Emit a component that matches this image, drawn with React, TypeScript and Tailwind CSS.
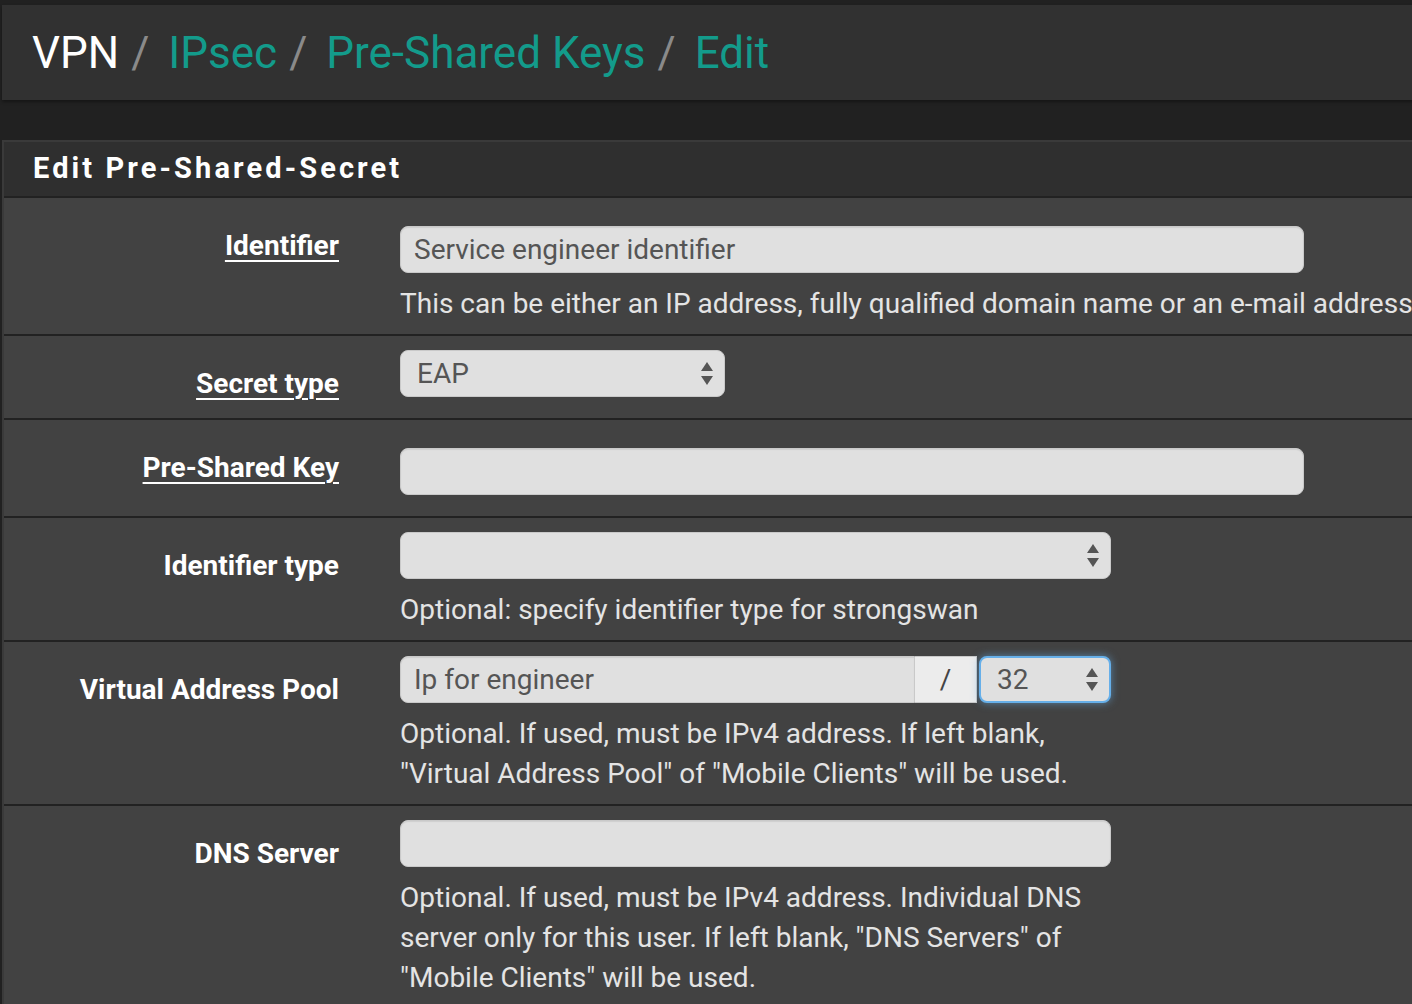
import React from "react";

const font = "font-['Roboto','Liberation_Sans',sans-serif]";

function Arrows() {
  return (
    <svg width="14" height="26" viewBox="0 0 14 26" className="shrink-0">
      <path d="M7 1 L13 10 L1 10 Z" fill="#555" />
      <path d="M1 15 L13 15 L7 24 Z" fill="#555" />
    </svg>
  );
}

function TextBox({ width, value, rounded = "rounded-[8px]" }: { width: string; value?: string; rounded?: string }) {
  return (
    <div
      className={`${width} ${rounded} flex h-[47px] items-center border border-[#c9c9c9] bg-[#e0e0e0] px-[13px] text-[28px] text-[#555] shadow-[inset_0_1px_1px_rgba(0,0,0,0.08)]`}
    >
      {value}
    </div>
  );
}

function SelectBox({ width, value, focus = false }: { width: string; value?: string; focus?: boolean }) {
  const edge = focus
    ? "border-2 border-[#66afe9] shadow-[0_0_8px_rgba(102,175,233,0.6)]"
    : "border border-[#c9c9c9]";
  return (
    <div
      className={`${width} flex h-[47px] items-center justify-between rounded-[8px] bg-[#e0e0e0] pl-[16px] pr-[10px] text-[28px] text-[#555] ${edge}`}
    >
      <span>{value}</span>
      <Arrows />
    </div>
  );
}

function Help({ lines }: { lines: string[] }) {
  return (
    <div className="mt-[11px] text-[28px] leading-[40px] text-[#e4e4e4]">
      {lines.map((l) => (
        <div key={l} className="whitespace-nowrap">
          {l}
        </div>
      ))}
    </div>
  );
}

function Row({
  label,
  underline = false,
  tall = false,
  padBottom,
  children,
}: {
  label: string;
  underline?: boolean;
  tall?: boolean;
  padBottom: string;
  children: React.ReactNode;
}) {
  return (
    <div className={`flex items-start border-b-2 border-[#222] bg-[#424242] ${tall ? "pt-[28px]" : "pt-[14px]"} ${padBottom}`}>
      <div className={`h-[47px] w-[335px] shrink-0 text-right ${tall ? "" : "pt-[14px]"}`}>
        <span
          className={`text-[28px] font-bold leading-[40px] text-white ${
            underline ? "underline decoration-2 underline-offset-[5px]" : ""
          }`}
        >
          {label}
        </span>
      </div>
      <div className="ml-[61px] min-w-0 flex-1">{children}</div>
    </div>
  );
}

export default function App() {
  return (
    <div className={`${font} h-[1004px] w-[1412px] overflow-hidden bg-[#212121] pl-[2px] pt-[5px]`}>
      <div className="w-[1600px]">
        <div className="flex h-[95px] items-center bg-[#313131] pl-[30px] text-[44px] leading-none shadow-[0_2px_3px_rgba(0,0,0,0.35)]">
          <span className="text-white">VPN</span>
          <span className="ml-[12px] mr-[19px] text-[#8a8a8a]">/</span>
          <span className="text-[#139b8b]">IPsec</span>
          <span className="ml-[12px] mr-[19px] text-[#8a8a8a]">/</span>
          <span className="text-[#139b8b]">Pre-Shared Keys</span>
          <span className="ml-[12px] mr-[19px] text-[#8a8a8a]">/</span>
          <span className="text-[#139b8b]">Edit</span>
        </div>

        <div className="mt-[40px] border-l-2 border-t-2 border-[#3a3a3a]">
          <div className="flex h-[56px] items-center border-b-2 border-[#222] bg-[#2f2f2f] pl-[29px] text-[29px] font-bold tracking-[3.1px] text-white">
            Edit Pre-Shared-Secret
          </div>

          <Row label="Identifier" underline tall padBottom="pb-[10px]">
            <TextBox width="w-[904px]" value="Service engineer identifier" />
            <Help lines={["This can be either an IP address, fully qualified domain name or an e-mail address."]} />
          </Row>

          <Row label="Secret type" underline padBottom="pb-[21px]">
            <SelectBox width="w-[325px]" value="EAP" />
          </Row>

          <Row label="Pre-Shared Key" underline tall padBottom="pb-[21px]">
            <TextBox width="w-[904px]" />
          </Row>

          <Row label="Identifier type" padBottom="pb-[10px]">
            <SelectBox width="w-[711px]" />
            <Help lines={["Optional: specify identifier type for strongswan"]} />
          </Row>

          <Row label="Virtual Address Pool" padBottom="pb-[10px]">
            <div className="flex w-[711px] items-center">
              <TextBox width="w-[515px]" value="Ip for engineer" rounded="rounded-l-[8px]" />
              <div className="flex h-[47px] w-[62px] items-center justify-center border border-l-0 border-[#c9c9c9] bg-[#ececec] text-[28px] text-[#444]">
                /
              </div>
              <div className="ml-[2px]">
                <SelectBox width="w-[132px]" value="32" focus />
              </div>
            </div>
            <Help
              lines={[
                "Optional. If used, must be IPv4 address. If left blank,",
                "\"Virtual Address Pool\" of \"Mobile Clients\" will be used.",
              ]}
            />
          </Row>

          <Row label="DNS Server" padBottom="pb-[10px]">
            <TextBox width="w-[711px]" />
            <Help
              lines={[
                "Optional. If used, must be IPv4 address. Individual DNS",
                "server only for this user. If left blank, \"DNS Servers\" of",
                "\"Mobile Clients\" will be used.",
              ]}
            />
          </Row>
        </div>
      </div>
    </div>
  );
}
